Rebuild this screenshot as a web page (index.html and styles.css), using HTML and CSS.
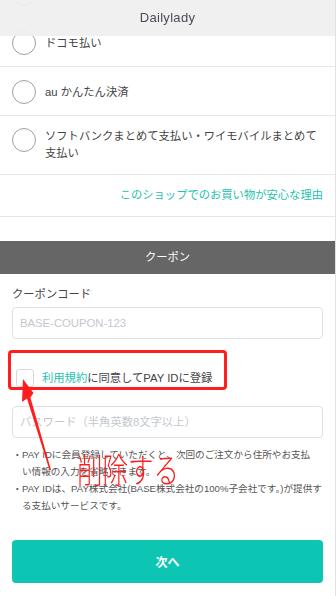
FILE: index.html
```html
<!DOCTYPE html>
<html lang="ja">
<head>
    <meta charset="UTF-8">
    <meta name="viewport" content="width=device-width, initial-scale=1.0">
    <title>Dailylady - お支払い</title>
    <link rel="stylesheet" href="styles.css">
</head>
<body>
    <header class="topbar">Dailylady</header>

    <main class="page">
        <ul class="pay-list">
            <li class="pay-item"><span class="radio"></span><span class="pay-label">クレジットカード決済</span></li>
            <li class="pay-item"><span class="radio"></span><span class="pay-label">ドコモ払い</span></li>
            <li class="pay-item"><span class="radio"></span><span class="pay-label">au かんたん決済</span></li>
            <li class="pay-item multi"><span class="radio"></span><span class="pay-label">ソフトバンクまとめて支払い・ワイモバイルまとめて支払い</span></li>
        </ul>

        <div class="safe-link"><a href="#">このショップでのお買い物が安心な理由</a></div>

        <section class="coupon">
            <h2 class="section-title">クーポン</h2>
            <div class="coupon-body">
                <label class="field-label" for="coupon">クーポンコード</label>
                <input class="text-input" id="coupon" type="text" placeholder="BASE-COUPON-123">

                <div class="payid-check">
                    <span class="checkbox"></span>
                    <span><a href="#">利用規約</a>に同意してPAY IDに登録</span>
                </div>

                <input class="text-input pw" type="password" placeholder="パスワード（半角英数8文字以上）">

                <ul class="notes">
                    <li>・PAY IDに会員登録していただくと、次回のご注文から住所やお支払<br>い情報の入力を省略できます。</li>
                    <li>・PAY IDは、PAY株式会社(BASE株式会社の100%子会社です。)が提供する支払いサービスです。</li>
                </ul>

                <button class="next-btn" type="button">次へ</button>
            </div>
        </section>
    </main>

    <!-- review markup drawn over the page -->
    <div class="mark-box"></div>
    <svg class="mark-arrow" width="336" height="596" viewBox="0 0 336 596">
        <polygon points="23,379 33.5,393 30.4,397.5 51,470 49.6,470.4 27,398.5 22,402" fill="#ff1e1e"/>
    </svg>
    <div class="mark-text">削除する</div>
</body>
</html>
```

FILE: styles.css
```css
body {
    margin: 0;
    width: 335px;
    height: 596px;
    overflow: hidden;
    position: relative;
    border-right: 1px solid #e2e2e2;
    background: #fff;
    font-family: "Liberation Sans", "Noto Sans CJK JP", sans-serif;
    font-size: 11.3px;
    color: #444;
}

a {
    color: #26c1b0;
    text-decoration: none;
}

.topbar {
    position: fixed;
    top: 0;
    left: 0;
    width: 335px;
    height: 36px;
    line-height: 36px;
    text-align: center;
    background-color: rgba(239, 239, 239, 0.93);
    color: #4b4b57;
    font-size: 13px;
    letter-spacing: 0.3px;
    z-index: 2;
}

/* page is scrolled a little: first row sits under the bar */
.page {
    margin-top: -31px;
}

.pay-list {
    list-style: none;
    margin: 0;
    padding: 0;
}

.pay-item {
    display: flex;
    align-items: flex-start;
    gap: 9px;
    padding: 13px 12px 11px;
    border-bottom: 1px solid #e6e6e6;
}

.radio {
    flex: none;
    box-sizing: border-box;
    width: 24px;
    height: 24px;
    border: 1px solid #a0a0a0;
    border-radius: 50%;
    background: #fff;
}

.pay-label {
    line-height: 24px;
}

.pay-item.multi {
    padding: 12px 12px 12px;
}

.pay-item.multi .pay-label {
    line-height: 17px;
}

.safe-link {
    text-align: right;
    padding: 12px 12px;
    line-height: 17px;
    border-bottom: 1px solid #e6e6e6;
}

.coupon {
    margin-top: 24px;
}

.section-title {
    margin: 0;
    height: 33px;
    line-height: 33px;
    background-color: #666;
    color: #fff;
    text-align: center;
    font-size: 11.3px;
    font-weight: normal;
}

.coupon-body {
    padding: 12px 12px 0;
}

.field-label {
    display: block;
    line-height: 17px;
    margin-bottom: 4px;
}

.text-input {
    display: block;
    box-sizing: border-box;
    width: 100%;
    height: 32px;
    margin: 0;
    padding: 0 7px;
    border: 1px solid #dde1e6;
    border-radius: 4px;
    font-family: "Liberation Sans", "Noto Sans CJK JP", sans-serif;
    font-size: 11.3px;
    color: #444;
    outline: none;
}

.text-input::placeholder {
    color: #c3c8cf;
}

.payid-check {
    display: flex;
    align-items: center;
    gap: 8px;
    margin-top: 30px;
    padding-left: 4px;
    height: 18px;
    line-height: 18px;
}

.checkbox {
    flex: none;
    box-sizing: border-box;
    width: 18px;
    height: 18px;
    border: 1px solid #d8d8d8;
    border-radius: 3px;
}

.text-input.pw {
    margin-top: 19px;
}

.notes {
    list-style: none;
    margin: 8px 0 0;
    padding: 0;
    font-size: 9.6px;
    line-height: 17px;
    color: #555;
}

.notes li {
    padding-left: 10px;
    text-indent: -1em;
}

.next-btn {
    display: block;
    width: 100%;
    height: 43px;
    margin-top: 26px;
    border: none;
    border-radius: 4px;
    background-color: #0cc5b3;
    color: #fff;
    font-family: "Liberation Sans", "Noto Sans CJK JP", sans-serif;
    font-size: 12px;
    font-weight: bold;
}

/* annotation layer */
.mark-box {
    position: absolute;
    left: 8px;
    top: 350px;
    width: 219px;
    height: 40px;
    box-sizing: border-box;
    border: 3px solid #ff1e1e;
    border-radius: 4px;
    z-index: 3;
}

.mark-arrow {
    position: absolute;
    left: 0;
    top: 0;
    z-index: 3;
    pointer-events: none;
}

.mark-text {
    position: absolute;
    left: 77px;
    top: 452px;
    font-family: "Noto Sans CJK JP", sans-serif;
    font-size: 34px;
    font-weight: 300;
    line-height: 1;
    color: #ff1e1e;
    transform: scaleX(0.75);
    transform-origin: left top;
    white-space: nowrap;
    z-index: 3;
}
```
